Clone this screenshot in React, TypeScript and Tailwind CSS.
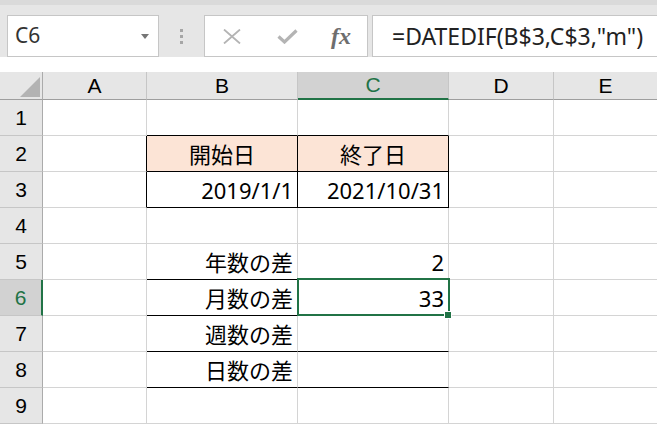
import React from "react";

const COLS = ["A", "B", "C", "D", "E"];
const ROWS = [1, 2, 3, 4, 5, 6, 7, 8, 9];

const colWidth: Record<string, string> = {
  A: "w-[104px]",
  B: "w-[151px]",
  C: "w-[151px]",
  D: "w-[105px]",
  E: "w-[104px]",
};

type CellData = { text: string; align: "center" | "right" };

const cells: Record<string, CellData> = {
  B2: { text: "開始日", align: "center" },
  C2: { text: "終了日", align: "center" },
  B3: { text: "2019/1/1", align: "right" },
  C3: { text: "2021/10/31", align: "right" },
  B5: { text: "年数の差", align: "right" },
  C5: { text: "2", align: "right" },
  B6: { text: "月数の差", align: "right" },
  C6: { text: "33", align: "right" },
  B7: { text: "週数の差", align: "right" },
  B8: { text: "日数の差", align: "right" },
};

const isBC = (c: string) => c === "B" || c === "C";

const Cell: React.FC<{ r: number; c: string }> = ({ r, c }) => {
  const data = cells[`${c}${r}`];
  const rightBlack = (r === 2 || r === 3) && (c === "A" || isBC(c));
  const bottomBlack = isBC(c) && ((r >= 1 && r <= 3) || (r >= 5 && r <= 8));
  const filled = r === 2 && isBC(c);
  const selected = r === 6 && c === "C";

  return (
    <div
      className={`relative h-[36px] shrink-0 border-r border-b flex items-center px-[4px] ${colWidth[c]} ${
        rightBlack ? "border-r-black" : "border-r-[#d4d4d4]"
      } ${bottomBlack ? "border-b-black" : "border-b-[#d4d4d4]"} ${
        filled ? "bg-[#fce4d6]" : "bg-white"
      } ${data?.align === "center" ? "justify-center" : "justify-end"} ${selected ? "z-10" : ""}`}
    >
      {data && <span className="text-[22px] leading-none text-black whitespace-nowrap">{data.text}</span>}
      {selected && (
        <>
          <div className="absolute -left-[1px] -top-[2px] w-[153px] h-[38px] border-2 border-[#217346] pointer-events-none" />
          <div className="absolute left-[146px] top-[31px] w-[8px] h-[8px] bg-[#217346] border border-white" />
        </>
      )}
    </div>
  );
};

const FormulaBar: React.FC = () => (
  <div className="bg-[#e6e6e6]">
    <div className="h-[5px] bg-[#dadada]" />
    <div className="flex items-stretch h-[42px] mt-[10px] mb-[15px]">
      {/* name box */}
      <div className="ml-[7px] w-[152px] bg-white border border-[#c6c6c6] flex items-center justify-between pl-[7px] pr-[9px]">
        <span className="text-[21px] text-[#333]">C6</span>
        <svg width="8" height="5" viewBox="0 0 8 5">
          <path d="M0 0 H8 L4 5 Z" fill="#767676" />
        </svg>
      </div>
      {/* grip dots */}
      <div className="w-[45px] flex flex-col items-center justify-center gap-[3px]">
        <div className="w-[3px] h-[3px] bg-[#a6a6a6]" />
        <div className="w-[3px] h-[3px] bg-[#a6a6a6]" />
        <div className="w-[3px] h-[3px] bg-[#a6a6a6]" />
      </div>
      {/* cancel / enter / fx */}
      <div className="w-[164px] bg-white border border-[#c6c6c6] flex items-center">
        <svg className="ml-[18px]" width="18" height="15" viewBox="0 0 18 15">
          <path d="M1 0.5 L17 14.5 M17 0.5 L1 14.5" stroke="#b4b4b4" strokeWidth="1.8" fill="none" />
        </svg>
        <svg className="ml-[36px]" width="21" height="15" viewBox="0 0 21 15">
          <path d="M1.5 7.5 L7.5 13 L19.5 1.5" stroke="#b4b4b4" strokeWidth="3.2" fill="none" />
        </svg>
        <span className="ml-[33px] font-['Liberation_Serif'] italic font-semibold text-[24px] leading-none text-[#6e6e6e]">
          fx
        </span>
      </div>
      {/* formula input */}
      <div className="ml-[4px] flex-1 bg-white border border-[#c6c6c6] border-r-0 flex items-center pl-[19px]">
        <span className="text-[23px] text-[#222] whitespace-nowrap">=DATEDIF(B$3,C$3,"m")</span>
      </div>
    </div>
  </div>
);

export default function App() {
  return (
    <div className="w-[657px] h-[424px] overflow-hidden bg-white font-['Noto_Sans','Noto_Sans_CJK_JP',sans-serif]">
      <FormulaBar />

      {/* column headers */}
      <div className="flex bg-[#e6e6e6]">
        <div className="w-[43px] h-[28px] shrink-0 border-r border-b border-r-[#ababab] border-b-[#9e9e9e] relative">
          <svg className="absolute left-[20px] top-[5px]" width="20" height="20" viewBox="0 0 20 20">
            <path d="M20 0 V20 H0 Z" fill="#b3b3b3" />
          </svg>
        </div>
        {COLS.map((c) => (
          <div
            key={c}
            className={`h-[28px] shrink-0 border-r flex items-center justify-center text-[21px] font-['Liberation_Sans',sans-serif] ${colWidth[c]} ${
              c === "C"
                ? "bg-[#d2d2d2] border-b-2 border-b-[#217346] text-[#217346] border-r-[#c6c6c6]"
                : "border-b border-b-[#9e9e9e] border-r-[#c6c6c6] text-black"
            }`}
          >
            {c}
          </div>
        ))}
      </div>

      {ROWS.map((r) => (
        <div key={r} className="flex">
          <div
            className={`w-[43px] h-[36px] shrink-0 border-b border-b-[#c6c6c6] flex items-center justify-center text-[21px] font-['Liberation_Sans',sans-serif] ${
              r === 6
                ? "bg-[#d2d2d2] border-r-2 border-r-[#217346] text-[#217346]"
                : "bg-[#e6e6e6] border-r border-r-[#ababab] text-black"
            }`}
          >
            {r}
          </div>
          {COLS.map((c) => (
            <Cell key={c} r={r} c={c} />
          ))}
        </div>
      ))}
    </div>
  );
}
